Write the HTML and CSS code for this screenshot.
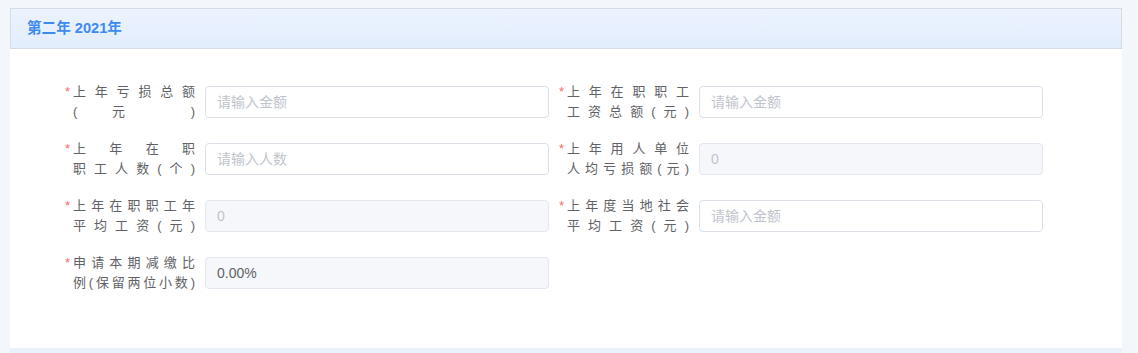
FILE: index.html
```html
<!DOCTYPE html>
<html lang="zh-CN">
<head>
<meta charset="utf-8">
<title>第二年 2021年</title>
<link rel="stylesheet" href="styles.css">
</head>
<body>
<div class="page">
  <section class="card">
    <div class="card-head">第二年 2021年</div>
    <div class="card-body">
      <div class="form-grid">
        <div class="item">
          <div class="label"><span class="req">*</span><span class="ltext">上年亏损总额<br>( 元 )</span></div>
          <div class="input"><span class="ph">请输入金额</span></div>
        </div>
        <div class="item">
          <div class="label"><span class="req">*</span><span class="ltext">上年在职职工<br>工资总额(元)</span></div>
          <div class="input"><span class="ph">请输入金额</span></div>
        </div>
        <div class="item">
          <div class="label"><span class="req">*</span><span class="ltext">上年在职<br>职工人数(个)</span></div>
          <div class="input"><span class="ph">请输入人数</span></div>
        </div>
        <div class="item">
          <div class="label"><span class="req">*</span><span class="ltext">上年用人单位<br>人均亏损额(元)</span></div>
          <div class="input disabled"><span class="dis">0</span></div>
        </div>
        <div class="item">
          <div class="label"><span class="req">*</span><span class="ltext">上年在职职工年<br>平均工资(元)</span></div>
          <div class="input disabled"><span class="dis">0</span></div>
        </div>
        <div class="item">
          <div class="label"><span class="req">*</span><span class="ltext">上年度当地社会<br>平均工资(元)</span></div>
          <div class="input"><span class="ph">请输入金额</span></div>
        </div>
        <div class="item">
          <div class="label"><span class="req">*</span><span class="ltext">申请本期减缴比<br>例(保留两位小数)</span></div>
          <div class="input disabled"><span class="val">0.00%</span></div>
        </div>
      </div>
    </div>
  </section>
  <div class="below"></div>
</div>
</body>
</html>
```

FILE: styles.css
```css
* { box-sizing: border-box; }
html, body { margin: 0; padding: 0; }
body {
  background: #f3f7fc;
  font-family: "Liberation Sans", "Noto Sans CJK SC", sans-serif;
  width: 1138px;
  height: 353px;
  overflow: hidden;
}
.page {
  padding: 8px 16px 0 10px;
}
.card {
  background: #ffffff;
}
.card-head {
  height: 41px;
  border: 1px solid #d6dce4;
  background: linear-gradient(#ecf3fe, #e2edfd);
  color: #3d8bf0;
  font-weight: bold;
  font-size: 14.6px;
  line-height: 39px;
  padding-left: 16px;
}
.card-body {
  padding: 33px 0 55px 54px;
}
.form-grid {
  display: grid;
  grid-template-columns: 485px 485px;
  column-gap: 9px;
  row-gap: 17px;
}
.item {
  display: flex;
  align-items: center;
  height: 40px;
}
.label {
  display: flex;
  width: 141px;
  padding-right: 10px;
  align-items: flex-start;
  color: #606266;
  font-size: 13px;
  line-height: 20px;
}
.req {
  width: 9px;
  color: #f56c6c;
  padding-left: 1px;
  font-size: 13px;
}
.ltext {
  width: 122px;
  text-align: justify;
  text-align-last: justify;
}
.input {
  width: 344px;
  height: 32px;
  border: 1px solid #dcdfe6;
  border-radius: 4px;
  background: #ffffff;
  padding: 0 11px;
  font-size: 14px;
  line-height: 30px;
  color: #606266;
}
.input.disabled {
  background: #f5f7fa;
  border-color: #e4e7ed;
}
.ph { color: #c0c4cc; }
.dis { color: #c0c4cc; }
.val { color: #606266; }
.below {
  height: 10px;
  background: #eaf1fb;
}
```
